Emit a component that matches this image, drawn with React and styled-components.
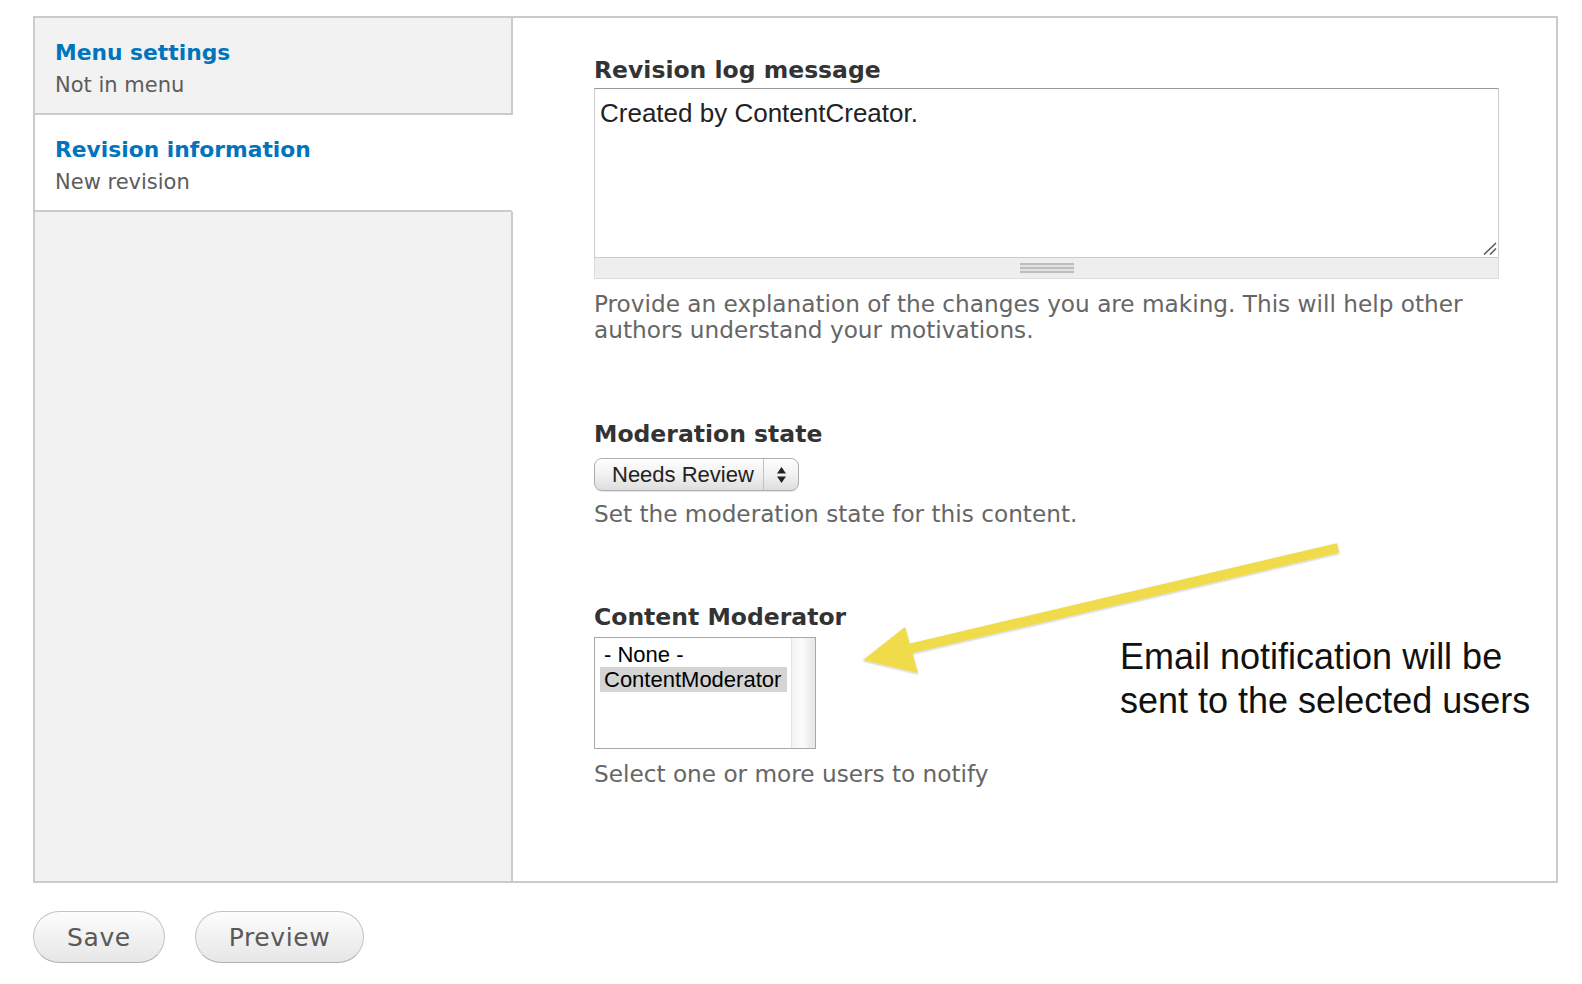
import React from 'react';
import styled, { createGlobalStyle } from 'styled-components';

const GlobalStyle = createGlobalStyle`
  html, body {
    margin: 0;
    background: #fff;
  }
  body {
    font-family: "DejaVu Sans", "Noto Sans", sans-serif;
  }
`;

const Page = styled.div`
  position: relative;
  width: 1525px;
  padding: 16px 0 0 33px;
`;

const Frame = styled.div`
  display: flex;
  height: 867px;
  box-sizing: border-box;
  border: 2px solid #cbcbcb;
  background: #fff;
`;

const Sidebar = styled.ul`
  display: flex;
  flex-direction: column;
  width: 478px;
  margin: 0;
  padding: 0;
  list-style: none;
  background: #f2f2f2;
`;

const Tab = styled.li`
  padding: 20px 20px 14px 20px;
  border-bottom: 2px solid #cbcbcb;
  border-right: 2px solid ${p => (p.$selected ? '#fff' : '#cbcbcb')};
  background: ${p => (p.$selected ? '#fff' : 'transparent')};
`;

const TabFiller = styled.li`
  flex: 1;
  border-right: 2px solid #cbcbcb;
`;

const TabTitle = styled.a`
  display: block;
  font-size: 21.8px;
  line-height: 30px;
  font-weight: 700;
  color: #0074bd;
  text-decoration: none;
`;

const TabSummary = styled.div`
  margin-top: 3px;
  font-size: 21px;
  line-height: 28px;
  color: #5c5c5c;
`;

const Pane = styled.div`
  flex: 1;
  padding: 37px 57px 0 81px;
`;

const Label = styled.label`
  display: block;
  margin-top: ${p => p.$gap || 0}px;
  font-size: 23.5px;
  line-height: 30px;
  font-weight: 700;
  color: #333;
`;

const TextareaWrap = styled.div`
  position: relative;
  margin-top: 3px;
`;

const Textarea = styled.textarea`
  display: block;
  width: 100%;
  height: 170px;
  margin: 0;
  box-sizing: border-box;
  padding: 9px 5px;
  border: 1px solid #ccc;
  border-top-color: #999;
  font: 26px "Liberation Sans", Arial, sans-serif;
  color: #222;
  resize: none;
  outline: none;
`;

const ResizeMark = styled.svg`
  position: absolute;
  right: 2px;
  bottom: 3px;
`;

const Grippie = styled.div`
  display: flex;
  align-items: center;
  justify-content: center;
  height: 20px;
  border: 1px solid #ddd;
  border-top: 0;
  background: #eee;
`;

const GripLines = styled.div`
  width: 54px;
  height: 10px;
  background: linear-gradient(
    #bdbdbd 0 2px, #e2e2e2 2px 4px, #bdbdbd 4px 6px, #e2e2e2 6px 8px, #bdbdbd 8px 10px
  );
`;

const Description = styled.div`
  margin-top: ${p => p.$top || 12}px;
  font-size: 23.2px;
  line-height: 26px;
  color: #666;
`;

const SelectBox = styled.div`
  display: flex;
  width: 205px;
  height: 33px;
  margin-top: 9px;
  box-sizing: border-box;
  border: 1px solid #adadad;
  border-radius: 8px;
  background: linear-gradient(#fefefe, #f1f1f1 50%, #dedede);
  box-shadow: inset 0 1px 0 #fff, 0 1px 1px rgba(0, 0, 0, 0.1);
  font: 22px "Liberation Sans", Arial, sans-serif;
  color: #222;
`;

const SelectValue = styled.div`
  flex: 1;
  padding-left: 17px;
  line-height: 31px;
  border-right: 1px solid #c2c2c2;
`;

const SelectArrows = styled.div`
  display: flex;
  align-items: center;
  justify-content: center;
  width: 34px;
`;

const ListBox = styled.div`
  display: flex;
  width: 222px;
  height: 112px;
  margin-top: 5px;
  box-sizing: border-box;
  border: 1px solid #a9a9a9;
`;

const OptionList = styled.div`
  flex: 1;
  padding: 4px 4px 0 5px;
`;

const Option = styled.div`
  padding-left: 4px;
  font: 22px/25px "Liberation Sans", Arial, sans-serif;
  color: #000;
  background: ${p => (p.$selected ? '#d4d4d4' : 'transparent')};
`;

const ScrollTrack = styled.div`
  width: 23px;
  border-left: 1px solid #e4e4e4;
  background: linear-gradient(to right, #f3f3f3, #fbfbfb 45%, #e6e6e6);
`;

const ButtonRow = styled.div`
  display: flex;
  gap: 30px;
  margin-top: 28px;
`;

const Button = styled.button`
  height: 52px;
  padding: 0 33px;
  border: 1px solid #c4c4c4;
  border-bottom-color: #b0b0b0;
  border-radius: 26px;
  background: linear-gradient(#fdfdfd, #e6e6e6);
  font: 25px "DejaVu Sans", "Noto Sans", sans-serif;
  letter-spacing: 0.6px;
  color: #595959;
`;

const Callout = styled.div`
  position: absolute;
  left: 1120px;
  top: 635px;
  font: 36px/44px "Liberation Sans", Arial, sans-serif;
  color: #111;
  white-space: nowrap;
`;

const ArrowSvg = styled.svg`
  position: absolute;
  left: 850px;
  top: 530px;
  overflow: visible;
`;

const Arrow = () => (
  <ArrowSvg width="500" height="160" viewBox="0 0 500 160">
    <defs>
      <filter id="arrowShadow" x="-10%" y="-30%" width="120%" height="160%">
        <feDropShadow dx="0" dy="1" stdDeviation="1" floodColor="#000" floodOpacity="0.25" />
      </filter>
    </defs>
    <g filter="url(#arrowShadow)" fill="#f0dc4c" stroke="none">
      <line x1="488" y1="18" x2="58" y2="119" stroke="#f0dc4c" strokeWidth="10" />
      <polygon points="13,130 55,97 68,143" />
    </g>
  </ArrowSvg>
);

const UpDown = () => (
  <svg width="11" height="18" viewBox="0 0 11 18">
    <polygon points="5.5,1 10,7.5 1,7.5" fill="#222" />
    <polygon points="1,10.5 10,10.5 5.5,17" fill="#222" />
  </svg>
);

export default function App() {
  return (
    <>
      <GlobalStyle />
      <Page>
        <Frame>
          <Sidebar>
            <Tab>
              <TabTitle href="#menu">Menu settings</TabTitle>
              <TabSummary>Not in menu</TabSummary>
            </Tab>
            <Tab $selected>
              <TabTitle href="#revision">Revision information</TabTitle>
              <TabSummary>New revision</TabSummary>
            </Tab>
            <TabFiller />
          </Sidebar>
          <Pane>
            <Label>Revision log message</Label>
            <TextareaWrap>
              <Textarea defaultValue="Created by ContentCreator." />
              <ResizeMark width="14" height="13" viewBox="0 0 14 13">
                <path d="M13 1 L1 12.5 M13 6.5 L7 12.5" stroke="#555" strokeWidth="1.5" fill="none" />
              </ResizeMark>
            </TextareaWrap>
            <Grippie>
              <GripLines />
            </Grippie>
            <Description>
              Provide an explanation of the changes you are making. This will help other authors
              understand your motivations.
            </Description>

            <Label $gap={76}>Moderation state</Label>
            <SelectBox>
              <SelectValue>Needs Review</SelectValue>
              <SelectArrows>
                <UpDown />
              </SelectArrows>
            </SelectBox>
            <Description $top={10}>Set the moderation state for this content.</Description>

            <Label $gap={75}>Content Moderator</Label>
            <ListBox>
              <OptionList>
                <Option>- None -</Option>
                <Option $selected>ContentModerator</Option>
              </OptionList>
              <ScrollTrack />
            </ListBox>
            <Description>Select one or more users to notify</Description>
          </Pane>
        </Frame>
        <ButtonRow>
          <Button>Save</Button>
          <Button>Preview</Button>
        </ButtonRow>
        <Arrow />
        <Callout>
          Email notification will be
          <br />
          sent to the selected users
        </Callout>
      </Page>
    </>
  );
}
